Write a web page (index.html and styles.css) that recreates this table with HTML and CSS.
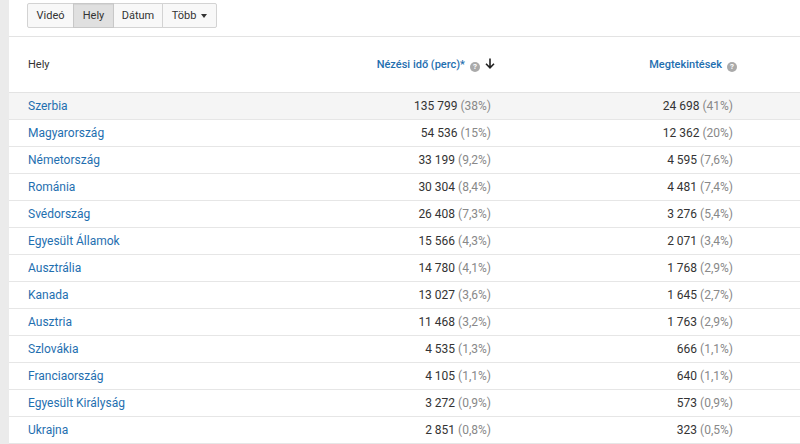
FILE: index.html
```html
<!DOCTYPE html>
<html lang="hu">
<head>
<meta charset="utf-8">
<link rel="stylesheet" href="styles.css">
</head>
<body>
<div class="strip"></div>
<main class="main">
  <div class="toolbar">
    <div class="btngroup">
      <button class="btn">Videó</button>
      <button class="btn active">Hely</button>
      <button class="btn">Dátum</button>
      <button class="btn">Több <span class="caret"></span></button>
    </div>
  </div>
  <table class="tbl">
    <thead>
      <tr>
        <th class="c-name">Hely</th>
        <th class="c-num"><span class="hlink">Nézési idő (perc)*</span><span class="help">?</span><svg class="arrow" width="10" height="11" viewBox="0 0 10 11"><path d="M5 0.5V9.5M1 5.8L5 9.8L9 5.8" fill="none" stroke="#222" stroke-width="1.6"/></svg></th>
        <th class="c-num c-views"><span class="hlink">Megtekintések</span><span class="help">?</span></th>
        <th class="c-rest"></th>
      </tr>
    </thead>
    <tbody>
      <tr class="hover"><td class="c-name">Szerbia</td><td class="c-num">135 799 <span class="pct">(38%)</span></td><td class="c-num c-views">24 698 <span class="pct">(41%)</span></td><td></td></tr>
      <tr><td class="c-name">Magyarország</td><td class="c-num">54 536 <span class="pct">(15%)</span></td><td class="c-num c-views">12 362 <span class="pct">(20%)</span></td><td></td></tr>
      <tr><td class="c-name">Németország</td><td class="c-num">33 199 <span class="pct">(9,2%)</span></td><td class="c-num c-views">4 595 <span class="pct">(7,6%)</span></td><td></td></tr>
      <tr><td class="c-name">Románia</td><td class="c-num">30 304 <span class="pct">(8,4%)</span></td><td class="c-num c-views">4 481 <span class="pct">(7,4%)</span></td><td></td></tr>
      <tr><td class="c-name">Svédország</td><td class="c-num">26 408 <span class="pct">(7,3%)</span></td><td class="c-num c-views">3 276 <span class="pct">(5,4%)</span></td><td></td></tr>
      <tr><td class="c-name">Egyesült Államok</td><td class="c-num">15 566 <span class="pct">(4,3%)</span></td><td class="c-num c-views">2 071 <span class="pct">(3,4%)</span></td><td></td></tr>
      <tr><td class="c-name">Ausztrália</td><td class="c-num">14 780 <span class="pct">(4,1%)</span></td><td class="c-num c-views">1 768 <span class="pct">(2,9%)</span></td><td></td></tr>
      <tr><td class="c-name">Kanada</td><td class="c-num">13 027 <span class="pct">(3,6%)</span></td><td class="c-num c-views">1 645 <span class="pct">(2,7%)</span></td><td></td></tr>
      <tr><td class="c-name">Ausztria</td><td class="c-num">11 468 <span class="pct">(3,2%)</span></td><td class="c-num c-views">1 763 <span class="pct">(2,9%)</span></td><td></td></tr>
      <tr><td class="c-name">Szlovákia</td><td class="c-num">4 535 <span class="pct">(1,3%)</span></td><td class="c-num c-views">666 <span class="pct">(1,1%)</span></td><td></td></tr>
      <tr><td class="c-name">Franciaország</td><td class="c-num">4 105 <span class="pct">(1,1%)</span></td><td class="c-num c-views">640 <span class="pct">(1,1%)</span></td><td></td></tr>
      <tr><td class="c-name">Egyesült Királyság</td><td class="c-num">3 272 <span class="pct">(0,9%)</span></td><td class="c-num c-views">573 <span class="pct">(0,9%)</span></td><td></td></tr>
      <tr><td class="c-name">Ukrajna</td><td class="c-num">2 851 <span class="pct">(0,8%)</span></td><td class="c-num c-views">323 <span class="pct">(0,5%)</span></td><td></td></tr>
    </tbody>
  </table>
</main>
</body>
</html>
```
FILE: styles.css
```css
html, body {
  margin: 0;
  padding: 0;
  background: #fff;
}
body {
  display: flex;
  width: 800px;
  height: 444px;
  overflow: hidden;
  font-family: Roboto, "Liberation Sans", Arial, sans-serif;
  color: #333;
}
.strip {
  width: 9px;
  flex: none;
  background: #ebebeb;
}
.main {
  flex: 1;
  min-width: 0;
}
.toolbar {
  height: 36px;
  border-bottom: 1px solid #e3e3e3;
  padding-left: 18px;
}
.btngroup {
  display: inline-flex;
  margin-top: 3px;
}
.btn {
  font-family: inherit;
  font-size: 11px;
  color: #333;
  height: 25px;
  padding: 0;
  margin: 0 -1px 0 0;
  border: 1px solid #d3d3d3;
  background: #f8f8f8;
  border-radius: 0;
  display: flex;
  align-items: center;
  justify-content: center;
  gap: 5px;
}
.btn:nth-child(1) { border-radius: 2px 0 0 2px; width: 47px; }
.btn:nth-child(2) { width: 41px; }
.btn:nth-child(3) { width: 50px; }
.btn:nth-child(4) { width: 55px; border-radius: 0 2px 2px 0; }
.btn.active {
  background: #e0e0e0;
  border-color: #c8c8c8;
  box-shadow: inset 0 1px 1px rgba(0,0,0,0.06);
  position: relative;
}
.caret {
  width: 0;
  height: 0;
  border-left: 3.5px solid transparent;
  border-right: 3.5px solid transparent;
  border-top: 4px solid #333;
}
.tbl {
  width: 100%;
  border-collapse: collapse;
  table-layout: fixed;
}
.tbl th {
  height: 55px;
  font-size: 11px;
  font-weight: 400;
  color: #333;
  border-bottom: 1px solid #e3e3e3;
  padding: 0;
  white-space: nowrap;
}
.tbl td {
  height: 26px;
  font-size: 12px;
  padding: 0;
  border-bottom: 1px solid #e6e6e6;
  white-space: nowrap;
}
.c-name {
  width: 261px;
  padding-left: 19px !important;
  text-align: left;
  color: #1f6fb0;
}
th.c-name { color: #333; }
.c-num {
  width: 206px;
  text-align: right;
  color: #333;
}
td.c-num { padding-right: 5px !important; }
th.c-num { padding-right: 1px !important; }
.c-views { width: 241px; }
.hlink { color: #1f6fb0; font-weight: 500; }
.help {
  display: inline-block;
  width: 10px;
  height: 10px;
  border-radius: 50%;
  background: #aaa;
  color: #fff;
  font-size: 8px;
  line-height: 10px;
  text-align: center;
  font-weight: 700;
  margin-left: 5px;
  vertical-align: -1px;
}
.arrow {
  margin-left: 5px;
  vertical-align: -1px;
}
.pct { color: #888; }
tr.hover td { background: #f5f5f5; }
```
